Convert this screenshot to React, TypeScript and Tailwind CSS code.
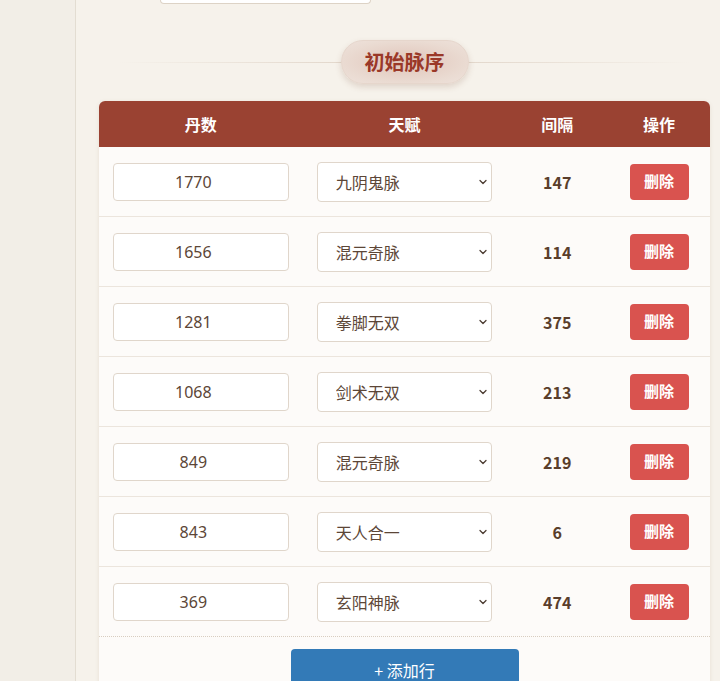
import { ChevronDown } from 'lucide-react'

const ROWS = [
  { dan: 1770, talent: '九阴鬼脉', gap: 147 },
  { dan: 1656, talent: '混元奇脉', gap: 114 },
  { dan: 1281, talent: '拳脚无双', gap: 375 },
  { dan: 1068, talent: '剑术无双', gap: 213 },
  { dan: 849, talent: '混元奇脉', gap: 219 },
  { dan: 843, talent: '天人合一', gap: 6 },
  { dan: 369, talent: '玄阳神脉', gap: 474 },
]

const TALENTS = ['九阴鬼脉', '混元奇脉', '拳脚无双', '剑术无双', '天人合一', '玄阳神脉']

export default function App() {
  return (
    <div className="flex h-[681px] overflow-hidden bg-[#f2eee7] font-['Noto_Sans_CJK_SC','Noto_Sans',sans-serif]">
      <div className="w-[75px] shrink-0" />
      <div className="flex-1 border-l border-[#e3ddd2] bg-[#f6f2eb] pl-[23px]">
        {/* tail of the field above */}
        <div className="ml-[61px] h-[4px] w-[211px] rounded-b border border-t-0 border-[#ddd3c6] bg-white" />

        <div className="w-[611px]">
          {/* section title */}
          <div className="relative mt-[36px] flex h-[44px] items-center justify-center">
            <div className="absolute inset-x-[20px] top-1/2 h-px bg-gradient-to-r from-transparent via-[#ddd0c3] to-transparent" />
            <div className="relative flex h-[44px] w-[128px] items-center justify-center rounded-full border border-[#e6d6cc] bg-[radial-gradient(ellipse_at_center,#e0c4b9_0%,#eadbd2_70%,#eee2db_100%)] shadow-[0_3px_6px_rgba(120,70,50,0.18)]">
              <span className="text-[20px] font-bold text-[#9a3828]">初始脉序</span>
            </div>
          </div>

          {/* table */}
          <div className="mt-[17px] overflow-hidden rounded-t-[6px] bg-[#fdfbf9] shadow-[0_1px_4px_rgba(120,90,60,0.12)]">
            <div className="grid h-[46px] grid-cols-[2fr_2fr_1fr_1fr] items-center bg-[#9a4232] text-[16px] font-bold text-white">
              <div className="text-center">丹数</div>
              <div className="text-center">天赋</div>
              <div className="text-center">间隔</div>
              <div className="text-center">操作</div>
            </div>

            {ROWS.map((r, i) => (
              <div
                key={i}
                className={`grid h-[70px] grid-cols-[2fr_2fr_1fr_1fr] items-center border-b ${
                  i === ROWS.length - 1 ? 'border-dotted border-[#d8cdc0]' : 'border-[#ece5dd]'
                }`}
              >
                <div className="px-[14px]">
                  <input
                    defaultValue={r.dan}
                    className="h-[38px] w-full rounded-[4px] border border-[#e0d6cb] bg-white pr-[15px] text-center font-['Noto_Sans','Noto_Sans_CJK_SC',sans-serif] text-[16px] text-[#5c4637] outline-none"
                  />
                </div>
                <div className="px-[14px]">
                  <div className="relative">
                    <select
                      defaultValue={r.talent}
                      className="h-[40px] w-full appearance-none rounded-[4px] border border-[#e0d6cb] bg-white pl-[18px] text-[16px] text-[#5c4637] outline-none"
                    >
                      {TALENTS.map(t => (
                        <option key={t}>{t}</option>
                      ))}
                    </select>
                    <ChevronDown className="pointer-events-none absolute right-[3px] top-1/2 h-[12px] w-[12px] -translate-y-1/2 text-[#4a3a30]" strokeWidth={2.5} />
                  </div>
                </div>
                <div className="text-center text-[16px] font-bold text-[#5a3e2b]">{r.gap}</div>
                <div className="flex justify-center">
                  <button className="h-[36px] w-[59px] rounded-[4px] bg-[#d9534f] text-[15px] font-bold text-white">
                    删除
                  </button>
                </div>
              </div>
            ))}

            <div className="flex justify-center pt-[12px] pb-[20px]">
              <button className="h-[42px] w-[228px] rounded-[4px] bg-[#337ab7] text-[16px] text-white">
                + 添加行
              </button>
            </div>
          </div>
        </div>
      </div>
    </div>
  )
}
